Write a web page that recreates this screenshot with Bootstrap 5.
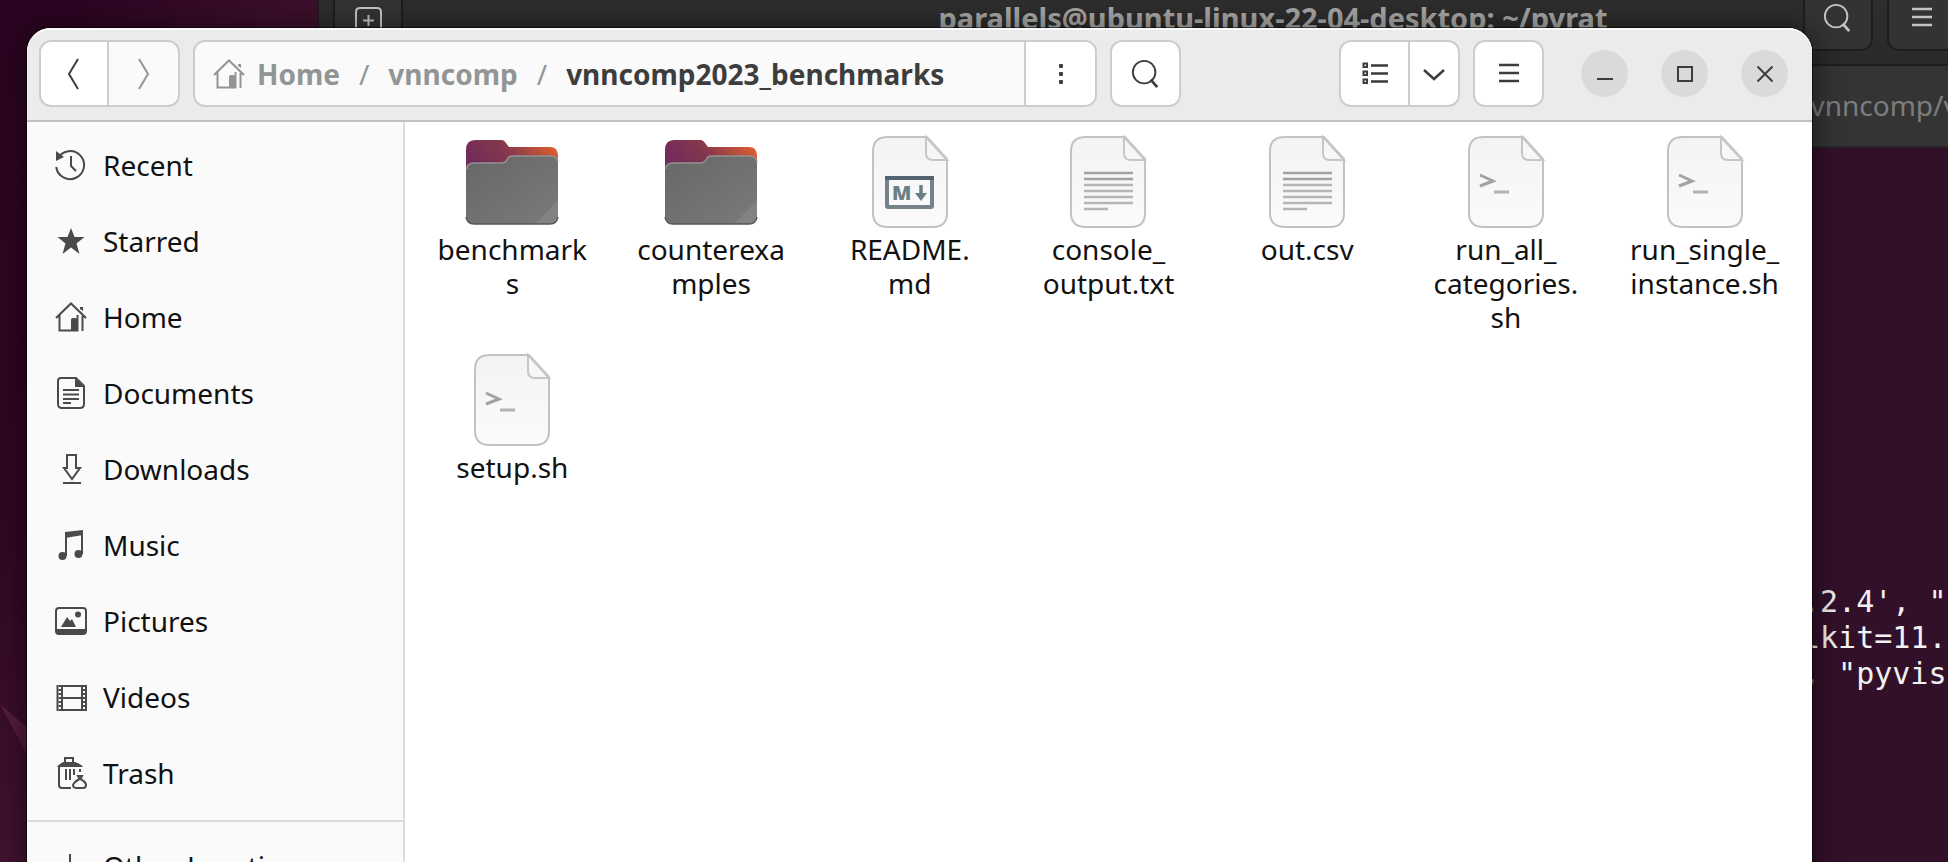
<!DOCTYPE html>
<html lang="en">
<head>
<meta charset="utf-8">
<meta name="viewport" content="width=device-width, initial-scale=1">
<title>vnncomp2023_benchmarks</title>
<link href="https://cdn.jsdelivr.net/npm/bootstrap@5.3.0/dist/css/bootstrap.min.css" rel="stylesheet">
<style>
  body { font-family: "Noto Sans", "Open Sans", sans-serif; font-size: 28px; line-height: 34px; color: #111; }
  .desktop { height: 100vh; background: linear-gradient(175deg, #2b0421 0%, #300722 50%, #4a1838 100%); }
  .desktop-top { left: 0; top: 0; width: 340px; height: 60px; background: linear-gradient(100deg, #2b0421 20%, #3b0f2b 85%); }
  .feather { left: 0; top: 700px; }
  svg { display: block; flex: none; }
  .ico { fill: none; stroke: currentColor; stroke-width: 2; }

  /* terminal behind */
  .term { left: 317px; right: -279px; top: -28px; bottom: -60px; background: #33102a; color: #a5a5a3; }
  .term-bar { height: 92px; padding: 12px 14px; background: linear-gradient(#2f2f2f, #2a2a2a); border-left: 2px solid #1c1c1c; }
  .term-start, .term-end { flex: 1; padding-right: 256px; }
  .term-end { gap: 14px; }
  .term-title { font-size: 29px; }
  .term-btn { width: 70px; height: 67px; padding: 0; color: #c4c4c4; background: #333; border: 2px solid #1e1e1e; border-radius: 12px; }
  .term-tabs { height: 84px; padding: 22px 0; background: #343434; border-top: 2px solid #1e1e1e; border-bottom: 2px solid #262626; color: #7d7d7d; }
  .term-edge { width: 427px; white-space: pre; overflow: hidden; }
  .term-out { font-family: "DejaVu Sans Mono", monospace; font-size: 30px; line-height: 36px; color: #f2f0f1; padding-top: 436px; }
  .term-out .term-edge { width: 425px; }

  /* file manager */
  .files { left: 27px; right: 136px; top: 28px; bottom: -60px; background: #fff; border-radius: 24px 24px 0 0;
    box-shadow: 0 0 0 1px rgba(0,0,0,.55), 0 4px 28px 6px rgba(0,0,0,.4); }
  .files-bar { height: 94px; padding: 12px 24px 0 12px; gap: 13px; background: #ebebeb; border-bottom: 2px solid #c1c1c1; box-shadow: inset 0 2px #f9f9f9; border-radius: 24px 24px 0 0; color: #3d3d3d; }
  .tool { width: 71px; height: 67px; padding: 0; display: flex; align-items: center; justify-content: center;
    background: #fff; color: #3d3d3d; border: 2px solid #cdcdcd; border-radius: 12px; }
  .tool:disabled { background: #fafafa; color: #929595; border-color: #cdcdcd; opacity: 1; }
  .tool-nav { width: 70px; }
  .tool-narrow { width: 50px; }
  .path { flex: 0 1 904px; height: 67px; background: #fafafa; border: 2px solid #cdcdcd; border-radius: 12px; overflow: hidden; }
  .path .tool { border-width: 0 0 0 2px; border-radius: 0; height: 100%; }
  .crumbs { padding-left: 18px; gap: 19px; white-space: nowrap; color: #929595; }
  .crumbs a { color: inherit; gap: 12px; }
  .crumbs .here { color: #3d3d3d; }
  .ctl { width: 47px; height: 47px; padding: 0; border: 0; border-radius: 50%; background: #dadada; color: #3d3d3d; display: flex; align-items: center; justify-content: center; }
  .ctls { gap: 33px; margin-left: 24px; padding-top: 10px; }
  .side { width: 378px; padding: 5px 0; background: #fafafa; border-right: 2px solid #dcdcdc; }
  .side a { height: 76px; padding-left: 28px; gap: 16px; color: #111; }
  .side svg { color: #4a4a4a; }
  .side hr { margin: 9px 0 6px; border-top: 2px solid #dcdcdc; opacity: 1; }
  .grid-files { display: grid; grid-template-columns: repeat(auto-fill, minmax(190px, 1fr)); gap: 18px 0; padding: 12px 8px; }
  .item { color: #111; }
  .item span { width: 156px; margin-top: 2px; overflow-wrap: anywhere; text-align: center; }
</style>
</head>
<body>
<svg width="0" height="0" class="position-absolute" aria-hidden="true">
  <defs>
    <linearGradient id="gBack" x1="0" y1=".4" x2="1" y2="0"><stop offset="0" stop-color="#702a5c"/><stop offset=".42" stop-color="#84374c"/><stop offset="1" stop-color="#ec652c"/></linearGradient>
    <linearGradient id="gFront" x1="0" y1="0" x2="1" y2="1"><stop offset="0" stop-color="#676767"/><stop offset="1" stop-color="#7a7a7a"/></linearGradient>
    <linearGradient id="gPage" x1="0" y1="0" x2="0" y2="1"><stop offset="0" stop-color="#f3f3f3"/><stop offset="1" stop-color="#fbfbfb"/></linearGradient>
  </defs>
  <symbol id="folder" viewBox="0 0 96 96">
    <path d="M2 16Q2 6 11 6H38Q40 6 42 9L45 13H86Q94 13 94 22V50H2Z" fill="url(#gBack)"/>
    <path d="M2 34Q2 29 10 29H38Q40 29 42 27L45 23Q46 22 49 22H87Q94 22 94 29V82Q94 90 86 90H10Q2 90 2 82Z" fill="url(#gFront)"/>
    <path d="M3 35Q3 29 10 29H38Q40 29 42 27L45 23Q46 22 49 22H87Q93 22 94 28" fill="none" stroke="#939393" stroke-width="1.4"/>
    <path d="M72 89L94 66V82Q94 89 86 89Z" fill="#828282"/>
    <path d="M2 83Q3 90 10 90H86Q93 90 94 83" fill="none" stroke="#565656" stroke-width="1.4"/>
  </symbol>
  <symbol id="page" viewBox="0 0 96 96">
    <path d="M26 3H65L85 25V79Q85 93 71 93H26Q11 93 11 79V17Q11 3 26 3Z" fill="url(#gPage)" stroke="#c2c2c2" stroke-width="2"/>
    <path d="M64 3V19Q64 26 71 26H85Z" fill="#f8f7f5" stroke="#c6c6c6" stroke-width="2"/>
  </symbol>
  <symbol id="text" viewBox="0 0 96 96">
    <use href="#page"/>
    <path d="M24 39H73M24 45H73" stroke="#a2a2a2" stroke-width="2.4"/>
    <path d="M24 51H73M24 57H73M24 63H73M24 69H73M24 75H48" stroke="#b5b5b5" stroke-width="2.4"/>
  </symbol>
  <symbol id="script" viewBox="0 0 96 96">
    <use href="#page"/>
    <path d="M22 41L35 47L22 52" fill="none" stroke="#a2a2a2" stroke-width="3"/>
    <path d="M36 58H51" stroke="#b3b3b3" stroke-width="3"/>
  </symbol>
  <symbol id="markdown" viewBox="0 0 96 96">
    <use href="#page"/>
    <rect x="25" y="44" width="45" height="29" rx="1" fill="none" stroke="#748389" stroke-width="4"/>
    <path d="M23 44H72" stroke="#52646d" stroke-width="4"/>
    <text x="30" y="66" font-family="Noto Sans" font-weight="900" font-size="20" fill="#6d7f86">M</text>
    <path d="M59 51V62" stroke="#6d7f86" stroke-width="3.500"/><path d="M53 59H65L59 67Z" fill="#6d7f86"/>
  </symbol>
  <symbol id="home" viewBox="0 0 32 32">
    <path class="ico" d="M1 17L16 2.500L31 17M4.500 14V29.500H22.500V14M27.500 15V30"/>
    <path d="M16 18.500Q16 17 18 17H20Q22 17 22 18.500V29H16ZM25 6H28V10L25 8Z" fill="currentColor"/>
  </symbol>
  <symbol id="lens" viewBox="0 0 32 32"><circle class="ico" cx="14" cy="14" r="12"/><path class="ico" d="M21 22L28 30" style="stroke-width:3"/></symbol>
  <symbol id="menu" viewBox="0 0 22 22"><path class="ico" d="M1 2H21M1 10H21M1 18H21" style="stroke-width:2.500"/></symbol>
</svg>

<div class="desktop position-relative overflow-hidden">
  <div class="desktop-top position-absolute"></div>
  <svg class="feather position-absolute" width="30" height="60" viewBox="0 0 30 60"><path d="M0 4L30 30V60Z" fill="#551c3d"/></svg>

  <section class="term position-absolute" aria-label="Terminal">
    <div class="term-bar d-flex">
      <div class="term-start"><button class="term-btn d-flex align-items-center justify-content-center" aria-label="New tab">
        <svg width="28" height="28" viewBox="0 0 28 28"><path class="ico" d="M2 28V8Q2 4 6 4H23Q27 4 27 8V28M14.500 11V22M9 16.500H20"/></svg></button></div>
      <div class="term-title fw-bold align-self-center text-nowrap">parallels@ubuntu-linux-22-04-desktop: ~/pyrat</div>
      <div class="term-end d-flex justify-content-end">
        <button class="term-btn d-flex align-items-center justify-content-center" aria-label="Find"><svg width="30" height="30"><use href="#lens"/></svg></button>
        <button class="term-btn d-flex align-items-center justify-content-center" aria-label="Terminal menu"><svg width="22" height="22"><use href="#menu"/></svg></button>
      </div>
    </div>
    <div class="term-tabs"><div class="term-edge ms-auto">/vnncomp/v</div></div>
    <div class="term-out"><div class="term-edge ms-auto">.2.4', "e
lkit=11.
, "pyvis</div></div>
  </section>

  <main class="files position-absolute d-flex flex-column">
    <header class="files-bar d-flex flex-shrink-0">
      <div class="d-flex">
        <button class="tool tool-nav rounded-end-0" aria-label="Back"><svg width="16" height="34" viewBox="0 0 16 34"><path class="ico" d="M12 2L3 17L12 32"/></svg></button>
        <button class="tool rounded-start-0 border-start-0" disabled aria-label="Forward"><svg width="16" height="34" viewBox="0 0 16 34"><path class="ico" d="M3 2L12 17L3 32"/></svg></button>
      </div>
      <div class="path d-flex">
        <nav class="crumbs d-flex align-items-center flex-grow-1" aria-label="Path">
          <a href="#" class="d-flex align-items-center fw-bold text-decoration-none"><svg width="32" height="32"><use href="#home"/></svg>Home</a>
          <span>/</span>
          <a href="#" class="fw-bold text-decoration-none">vnncomp</a>
          <span>/</span>
          <a href="#" class="here fw-bold text-decoration-none">vnncomp2023_benchmarks</a>
        </nav>
        <button class="tool flex-shrink-0" aria-label="Folder menu"><svg width="6" height="24" viewBox="0 0 6 24" fill="currentColor"><rect x="1" y="2" width="4" height="4" rx="1"/><rect x="1" y="10" width="4" height="4" rx="1"/><rect x="1" y="18" width="4" height="4" rx="1"/></svg></button>
      </div>
      <button class="tool" aria-label="Search"><svg width="30" height="30"><use href="#lens"/></svg></button>
      <div class="d-flex ms-auto">
        <button class="tool rounded-end-0" aria-label="List view"><svg width="26" height="24" viewBox="0 0 26 24"><path class="ico" d="M1.500 1.500H5V5H1.500ZM1.500 9.500H5V13H1.500ZM1.500 17.500H5V21H1.500Z"/><path class="ico" d="M9 3.500H26M9 11.500H26M9 19.500H26" style="stroke-width:2.500"/></svg></button>
        <button class="tool tool-narrow rounded-start-0 border-start-0" aria-label="View options"><svg width="22" height="14" viewBox="0 0 22 14"><path class="ico" d="M1 3L11 12L21 3" style="stroke-width:2.500"/></svg></button>
      </div>
      <button class="tool" aria-label="Menu"><svg width="22" height="22"><use href="#menu"/></svg></button>
      <div class="ctls d-flex align-self-start">
        <button class="ctl" aria-label="Minimize"><svg width="20" height="20" viewBox="0 0 20 20"><path class="ico" d="M2 15H18"/></svg></button>
        <button class="ctl" aria-label="Maximize"><svg width="20" height="20" viewBox="0 0 20 20"><rect class="ico" x="3" y="3" width="14" height="14"/></svg></button>
        <button class="ctl" aria-label="Close"><svg width="20" height="20" viewBox="0 0 20 20"><path class="ico" d="M2.500 2.500L17.500 17.500M17.500 2.500L2.500 17.500"/></svg></button>
      </div>
    </header>
    <div class="d-flex flex-grow-1">
      <nav class="side flex-shrink-0" aria-label="Places">
        <a href="#" class="d-flex align-items-center text-decoration-none"><svg width="32" height="32" viewBox="0 0 32 32"><path class="ico" d="M3 9A14 14 0 1 1 1.200 18M16 7V17L21 22"/><path d="M1 2L9 8L1 12Z" fill="currentColor"/></svg>Recent</a>
        <a href="#" class="d-flex align-items-center text-decoration-none"><svg width="32" height="32" viewBox="0 0 32 32"><path d="M16 3L19.500 12H29.500L21.500 18.500L24.500 29L16 22.500L7.500 29L10.500 18.500L2.500 12H12.500Z" fill="currentColor"/></svg>Starred</a>
        <a href="#" class="d-flex align-items-center text-decoration-none"><svg width="32" height="32"><use href="#home"/></svg>Home</a>
        <a href="#" class="d-flex align-items-center text-decoration-none"><svg width="32" height="32" viewBox="0 0 32 32"><path class="ico" d="M6 1H21L29 9V27Q29 31 25 31H7Q3 31 3 27V4Q3 1 6 1ZM8 13H24M8 17.500H24M8 22H24M8 26H16"/><path d="M20 1L29 10H20Z" fill="currentColor"/></svg>Documents</a>
        <a href="#" class="d-flex align-items-center text-decoration-none"><svg width="32" height="32" viewBox="0 0 32 32"><path class="ico" d="M12 2H21V15H25L17 26L9 15H12ZM8 30H26"/></svg>Downloads</a>
        <a href="#" class="d-flex align-items-center text-decoration-none"><svg width="32" height="32" viewBox="0 0 32 32"><path d="M10 3L28 1V6L10 9Z" fill="currentColor"/><path class="ico" d="M11 4V27M27 3V25"/><circle cx="7.500" cy="27" r="4" fill="currentColor"/><circle cx="23.500" cy="25" r="4" fill="currentColor"/></svg>Music</a>
        <a href="#" class="d-flex align-items-center text-decoration-none"><svg width="32" height="32" viewBox="0 0 32 32"><rect class="ico" x="1" y="3" width="30" height="26" rx="3"/><path d="M1 24H31V27Q31 29 28 29H4Q1 29 1 27ZM6 22L12 12L15 16L17 14L21 22Z" fill="currentColor"/><circle cx="23" cy="9.500" r="3" fill="currentColor"/></svg>Pictures</a>
        <a href="#" class="d-flex align-items-center text-decoration-none"><svg width="32" height="32" viewBox="0 0 32 32"><path class="ico" d="M7 5H27V29H7ZM7 17H27M2.500 4V30M31 4V30"/><path d="M5 4V30M29 4V30" stroke="currentColor" stroke-width="3" stroke-dasharray="2 2" fill="none"/></svg>Videos</a>
        <a href="#" class="d-flex align-items-center text-decoration-none"><svg width="32" height="32" viewBox="0 0 32 32"><path class="ico" d="M10 5V1H18V5M4 10V28Q4 31 7 31H16M11 12V23M15 12V23M19 12V18M25 12V15M23 19H27L25.500 22Q31 25 31 28Q31 31 28 31H22Q18 31 18 28Q19 25 24.500 22Z"/><path d="M2 10Q3 8 8 5H20Q26 7 28 10Z" fill="currentColor"/></svg>Trash</a>
        <hr>
        <a href="#" class="d-flex align-items-center text-decoration-none"><svg width="32" height="32" viewBox="0 0 32 32"><path class="ico" d="M15 4V28M3 16H27"/></svg>Other Locations</a>
      </nav>
      <div class="grid-files flex-grow-1 align-content-start">
        <a href="#" class="item d-flex flex-column align-items-center text-decoration-none"><svg width="96" height="96"><use href="#folder"/></svg><span>benchmarks</span></a>
        <a href="#" class="item d-flex flex-column align-items-center text-decoration-none"><svg width="96" height="96"><use href="#folder"/></svg><span>counterexamples</span></a>
        <a href="#" class="item d-flex flex-column align-items-center text-decoration-none"><svg width="96" height="96"><use href="#markdown"/></svg><span>README.<wbr>md</span></a>
        <a href="#" class="item d-flex flex-column align-items-center text-decoration-none"><svg width="96" height="96"><use href="#text"/></svg><span>console_<wbr>output.txt</span></a>
        <a href="#" class="item d-flex flex-column align-items-center text-decoration-none"><svg width="96" height="96"><use href="#text"/></svg><span>out.csv</span></a>
        <a href="#" class="item d-flex flex-column align-items-center text-decoration-none"><svg width="96" height="96"><use href="#script"/></svg><span>run_all_<wbr>categories.<wbr>sh</span></a>
        <a href="#" class="item d-flex flex-column align-items-center text-decoration-none"><svg width="96" height="96"><use href="#script"/></svg><span>run_single_<wbr>instance.sh</span></a>
        <a href="#" class="item d-flex flex-column align-items-center text-decoration-none"><svg width="96" height="96"><use href="#script"/></svg><span>setup.sh</span></a>
      </div>
    </div>
  </main>
</div>
<script src="https://cdn.jsdelivr.net/npm/bootstrap@5.3.0/dist/js/bootstrap.bundle.min.js"></script>
</body>
</html>
